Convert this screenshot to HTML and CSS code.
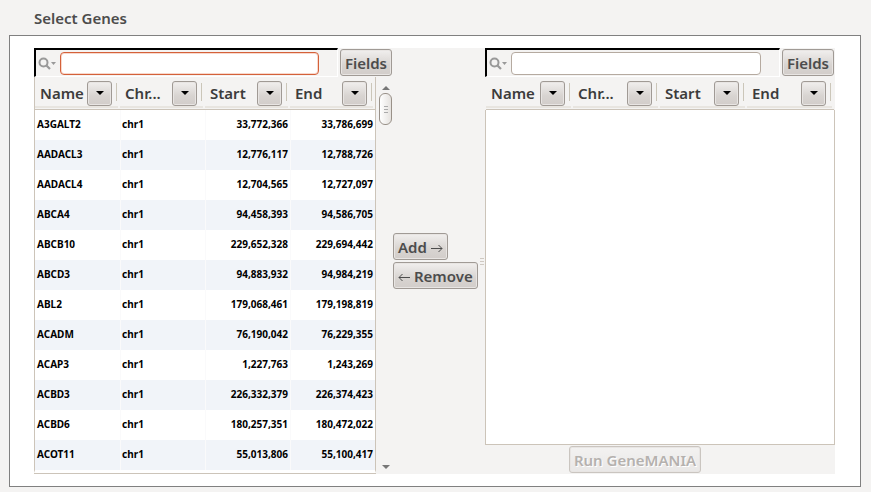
FILE: index.html
```html
<!DOCTYPE html>
<html lang="en">
<head>
<meta charset="utf-8">
<title>Select Genes</title>
<link rel="stylesheet" href="styles.css">
</head>
<body>
<h1 class="title">Select Genes</h1>
<main class="panel">
  <div class="chooser">
    <section class="pane" aria-label="Available genes">
      <div class="toolbar">
        <div class="search">
          <svg class="lens" viewBox="0 0 18 14" aria-hidden="true"><circle cx="5.5" cy="5.5" r="4" fill="none" stroke="#999" stroke-width="2"/><path d="M8.500 8.500L12 12" stroke="#999" stroke-width="2.200"/><path d="M13 5h5l-2.500 3z" fill="#999"/></svg>
          <input class="query active" type="text" aria-label="Search available genes">
        </div>
        <button class="button">Fields</button>
      </div>
      <div class="scroller">
        <table class="genes">
          <thead><tr>
            <th><div class="head"><span>Name</span><button class="drop" aria-label="Name options"></button></div></th>
            <th><div class="head"><span>Chr...</span><button class="drop" aria-label="Chromosome options"></button></div></th>
            <th><div class="head"><span>Start</span><button class="drop" aria-label="Start options"></button></div></th>
            <th><div class="head"><span>End</span><button class="drop" aria-label="End options"></button></div></th>
          </tr></thead>
          <tbody>
            <tr><td>A3GALT2</td><td>chr1</td><td>33,772,366</td><td>33,786,699</td></tr>
            <tr><td>AADACL3</td><td>chr1</td><td>12,776,117</td><td>12,788,726</td></tr>
            <tr><td>AADACL4</td><td>chr1</td><td>12,704,565</td><td>12,727,097</td></tr>
            <tr><td>ABCA4</td><td>chr1</td><td>94,458,393</td><td>94,586,705</td></tr>
            <tr><td>ABCB10</td><td>chr1</td><td>229,652,328</td><td>229,694,442</td></tr>
            <tr><td>ABCD3</td><td>chr1</td><td>94,883,932</td><td>94,984,219</td></tr>
            <tr><td>ABL2</td><td>chr1</td><td>179,068,461</td><td>179,198,819</td></tr>
            <tr><td>ACADM</td><td>chr1</td><td>76,190,042</td><td>76,229,355</td></tr>
            <tr><td>ACAP3</td><td>chr1</td><td>1,227,763</td><td>1,243,269</td></tr>
            <tr><td>ACBD3</td><td>chr1</td><td>226,332,379</td><td>226,374,423</td></tr>
            <tr><td>ACBD6</td><td>chr1</td><td>180,257,351</td><td>180,472,022</td></tr>
            <tr><td>ACOT11</td><td>chr1</td><td>55,013,806</td><td>55,100,417</td></tr>
          </tbody>
        </table>
        <div class="scrollbar" aria-hidden="true">
          <span class="arrow up"></span>
          <span class="thumb"><i></i><i></i><i></i></span>
          <span class="arrow down"></span>
        </div>
      </div>
    </section>
    <div class="actions">
      <button class="button">Add <svg class="glyph" viewBox="0 0 12 10" aria-hidden="true"><path d="M0 5.500h11M7.500 2L11 5.500L7.500 9"/></svg></button>
      <button class="button"><svg class="glyph" viewBox="0 0 12 10" aria-hidden="true"><path d="M12 5.500H1M4.500 2L1 5.500L4.500 9"/></svg> Remove</button>
    </div>
    <div class="splitter" aria-hidden="true"><i></i><i></i><i></i></div>
    <section class="pane" aria-label="Selected genes">
      <div class="toolbar">
        <div class="search">
          <svg class="lens" viewBox="0 0 18 14" aria-hidden="true"><circle cx="5.5" cy="5.5" r="4" fill="none" stroke="#999" stroke-width="2"/><path d="M8.500 8.500L12 12" stroke="#999" stroke-width="2.200"/><path d="M13 5h5l-2.500 3z" fill="#999"/></svg>
          <input class="query" type="text" aria-label="Search selected genes">
        </div>
        <button class="button">Fields</button>
      </div>
      <div class="selected">
        <table class="genes">
          <thead><tr>
            <th><div class="head"><span>Name</span><button class="drop" aria-label="Name options"></button></div></th>
            <th><div class="head"><span>Chr...</span><button class="drop" aria-label="Chromosome options"></button></div></th>
            <th><div class="head"><span>Start</span><button class="drop" aria-label="Start options"></button></div></th>
            <th><div class="head"><span>End</span><button class="drop" aria-label="End options"></button></div></th>
          </tr></thead>
        </table>
        <div class="empty"></div>
      </div>
      <div class="run"><button class="button" disabled>Run GeneMANIA</button></div>
    </section>
  </div>
</main>
</body>
</html>
```
FILE: styles.css
```css
* { box-sizing: border-box; }
body {
  margin: 0;
  padding: 8px 10px 4px 9px;
  background: #f4f3f2;
  color: #3c3c3c;
  font: 600 15px/20px "Noto Sans", "Open Sans", sans-serif;
}
.title { margin: 0 0 7px; padding-left: 25px; font-size: 15px; font-weight: 600; line-height: 20px; color: #4c4c4c; }
.panel { padding: 12px 25px 12px 24px; border: 1px solid #808080; background: #fff; }
.chooser { display: grid; grid-template-columns: minmax(0, 359fr) 85px 7px minmax(0, 350fr); background: #f4f3f2; }
.pane { display: flex; flex-direction: column; min-width: 0; }
.toolbar { display: flex; gap: 2px; height: 29px; padding-right: 1px; align-items: center; }
.search {
  display: flex; flex: 1; align-items: center; gap: 4px; min-width: 0; height: 29px;
  padding: 1px 18px 0 2px;
  border: solid #fff; border-width: 2px 1px 1px 2px;
  border-top-color: #000; border-left-color: #000;
}
.lens { width: 18px; height: 14px; flex: none; }
.query {
  flex: 1; min-width: 0; height: 23px; padding: 0 4px; margin-bottom: 1px;
  border: 1px solid #b5aaa0; border-radius: 4px; background: #fff;
  font: inherit; outline: none;
}
.query.active { border-color: #d4613a; box-shadow: inset 0 0 0 1px #f8d8cc; }
.button, .drop {
  border: 1px solid #a09a95; border-radius: 3px;
  background: linear-gradient(#f1efee, #d8d4d1 60%, #d2cdca);
  box-shadow: inset 0 0 0 1px #e8e5e3;
}
.button {
  height: 27px; padding: 0 4px; color: #4c4c4c;
  font: inherit; line-height: 20px; white-space: nowrap;
}
.button:disabled { border-color: #cac5c0; background: linear-gradient(#f3f2f1, #e9e7e6); color: #b5b1ae; text-shadow: 1px 1px #fff; }
.scroller {
  display: grid; grid-template-columns: minmax(0, 1fr) 17px; height: 397px;
  background: linear-gradient(#ccc4b9, #ccc4b9) left bottom / calc(100% - 17px) 1px no-repeat;
}
.scroller .genes { align-self: start; border-bottom: 3px solid #fff; }
.genes { width: 100%; table-layout: fixed; border-collapse: separate; border-spacing: 0; border: solid #ccc4b9; border-width: 0 1px; }
.genes th { padding: 0; height: 33px; border-bottom: 1px solid #ccc4b9; background: #f4f3f2; font-weight: 600; }
.head {
  display: flex; align-items: center; justify-content: space-between;
  height: 30px; margin: 1px 2px 1px 0; padding: 2px 6px 0 5px;
  border-bottom: 2px solid #e8e5e0; position: relative;
}
.head::after { content: ""; position: absolute; right: 1px; top: 5px; height: 18px; border-right: 1px solid #cbc6b9; }
.drop { display: grid; place-items: center; width: 25px; height: 25px; padding: 0; }
.drop::after { content: ""; border: solid transparent; border-width: 4px 4px 0; border-top-color: #000; }
.genes td {
  height: 30px; padding: 0 2px 2px 1px; border-left: 1px solid #fafafb; background: #fff;
  color: #000; font-size: 10px; font-weight: 700; line-height: 16px;
}
.genes tr:nth-child(even) td { background: #f1f4f9; }
.genes td:first-child { border-left: 0; padding-left: 2px; }
.genes td:nth-child(n+3) { text-align: right; }
.scrollbar { display: flex; flex-direction: column; align-items: center; padding: 9px 0 5px 2px; }
.arrow { border: solid transparent; border-width: 0 4px; }
.up { border-bottom: 4px solid #777; }
.down { margin-top: auto; border-top: 4px solid #777; }
.thumb {
  display: flex; flex-direction: column; align-items: center; justify-content: center; gap: 2px;
  width: 13px; height: 32px; margin-top: 3px; border: 1px solid #999189; border-radius: 6px;
  background: linear-gradient(90deg, #fff, #e5e2df);
}
.thumb i { width: 4px; height: 1px; background: #aaa; }
.actions { display: flex; flex-direction: column; align-items: flex-start; justify-content: center; gap: 2px; }
.glyph { width: 12px; height: 10px; fill: none; stroke: #4c4c4c; stroke-width: 1; }
.splitter { display: flex; flex-direction: column; align-items: center; justify-content: center; gap: 2px; }
.splitter i { width: 4px; height: 1px; background: #cfc9c2; }
.selected { display: flex; flex: 1; flex-direction: column; }
.selected .genes { border-color: #f4f3f2; }
.empty { flex: 1; border: 1px solid #ccc4b9; border-top: 0; background: #fff; }
.run { display: flex; justify-content: center; padding: 1px 50px 1px 0; }
```
